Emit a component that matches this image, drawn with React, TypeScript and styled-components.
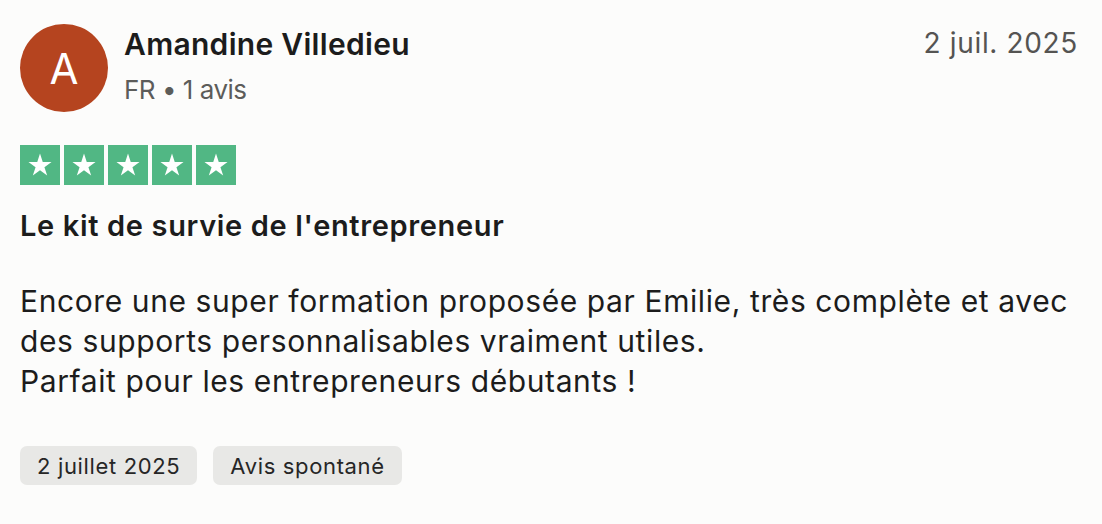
import React from "react";
import styled, { createGlobalStyle } from "styled-components";

const GlobalStyle = createGlobalStyle`
  html, body {
    margin: 0;
    padding: 0;
    background: #fcfcfb;
  }
  body {
    font-family: Inter, "Liberation Sans", sans-serif;
    color: #1c1c1c;
  }
`;

type Review = {
  initial: string;
  name: string;
  country: string;
  count: string;
  shortDate: string;
  rating: number;
  title: string;
  body: string[];
  tags: string[];
};

const review: Review = {
  initial: "A",
  name: "Amandine Villedieu",
  country: "FR",
  count: "1 avis",
  shortDate: "2 juil. 2025",
  rating: 5,
  title: "Le kit de survie de l'entrepreneur",
  body: [
    "Encore une super formation proposée par Emilie, très complète et avec des supports personnalisables vraiment utiles.",
    "Parfait pour les entrepreneurs débutants !",
  ],
  tags: ["2 juillet 2025", "Avis spontané"],
};

const Card = styled.article`
  box-sizing: border-box;
  width: 1102px;
  height: 524px;
  padding: 24px 24px 0 20px;
`;

const Header = styled.header`
  display: flex;
  align-items: flex-start;
  gap: 16px;
`;

const Avatar = styled.div`
  flex: none;
  width: 88px;
  height: 88px;
  border-radius: 50%;
  background: #b5441f;
  color: #fff;
  display: flex;
  align-items: center;
  justify-content: center;
  font-size: 42px;
  font-weight: 400;
`;

const Identity = styled.div`
  flex: 1;
  display: flex;
  flex-direction: column;
  padding-top: 2px;
`;

const Name = styled.div`
  font-size: 30px;
  font-weight: 600;
  line-height: 36px;
  letter-spacing: 0.3px;
  color: #1c1c1c;
`;

const Meta = styled.div`
  margin-top: 14px;
  font-size: 26px;
  line-height: 28px;
  color: #5c5c5a;
  letter-spacing: -0.5px;
`;

const DateLabel = styled.time`
  font-size: 28px;
  line-height: 36px;
  padding-top: 1px;
  color: #555452;
  letter-spacing: 0.65px;
`;

const Stars = styled.div`
  display: flex;
  gap: 4px;
  margin-top: 33px;
`;

const StarBox = styled.span<{ $on: boolean }>`
  width: 40px;
  height: 40px;
  background: ${(p) => (p.$on ? "#51b784" : "#dcdce6")};
  display: flex;
  align-items: center;
  justify-content: center;
`;

const Title = styled.h2`
  margin: 23px 0 0 0;
  font-size: 29px;
  line-height: 36px;
  font-weight: 600;
  letter-spacing: 0.65px;
  color: #1c1c1c;
`;

const Body = styled.p`
  margin: 37px 0 0 0;
  font-size: 30px;
  line-height: 40px;
  letter-spacing: 0.6px;
  color: #1c1c1c;
`;

const Tags = styled.div`
  display: flex;
  gap: 16px;
  margin-top: 45px;
`;

const Tag = styled.span`
  background: #e8e8e6;
  border-radius: 7px;
  padding: 0 17px;
  height: 39px;
  display: flex;
  align-items: center;
  font-size: 22px;
  color: #262626;
  letter-spacing: 0.65px;
`;

const Star = () => (
  <svg width="28" height="28" viewBox="0 0 24 24">
    <path
      fill="#fff"
      d="M12 2.2l2.35 7.2h7.55l-6.1 4.45 2.35 7.2L12 16.6l-6.15 4.45 2.35-7.2L2.1 9.4h7.55z"
    />
  </svg>
);

export default function App() {
  return (
    <>
      <GlobalStyle />
      <Card>
        <Header>
          <Avatar>{review.initial}</Avatar>
          <Identity>
            <Name>{review.name}</Name>
            <Meta>
              {review.country} • {review.count}
            </Meta>
          </Identity>
          <DateLabel>{review.shortDate}</DateLabel>
        </Header>
        <Stars>
          {Array.from({ length: 5 }).map((_, i) => (
            <StarBox key={i} $on={i < review.rating}>
              <Star />
            </StarBox>
          ))}
        </Stars>
        <Title>{review.title}</Title>
        <Body>
          {review.body[0]}
          <br />
          {review.body[1]}
        </Body>
        <Tags>
          {review.tags.map((t) => (
            <Tag key={t}>{t}</Tag>
          ))}
        </Tags>
      </Card>
    </>
  );
}
